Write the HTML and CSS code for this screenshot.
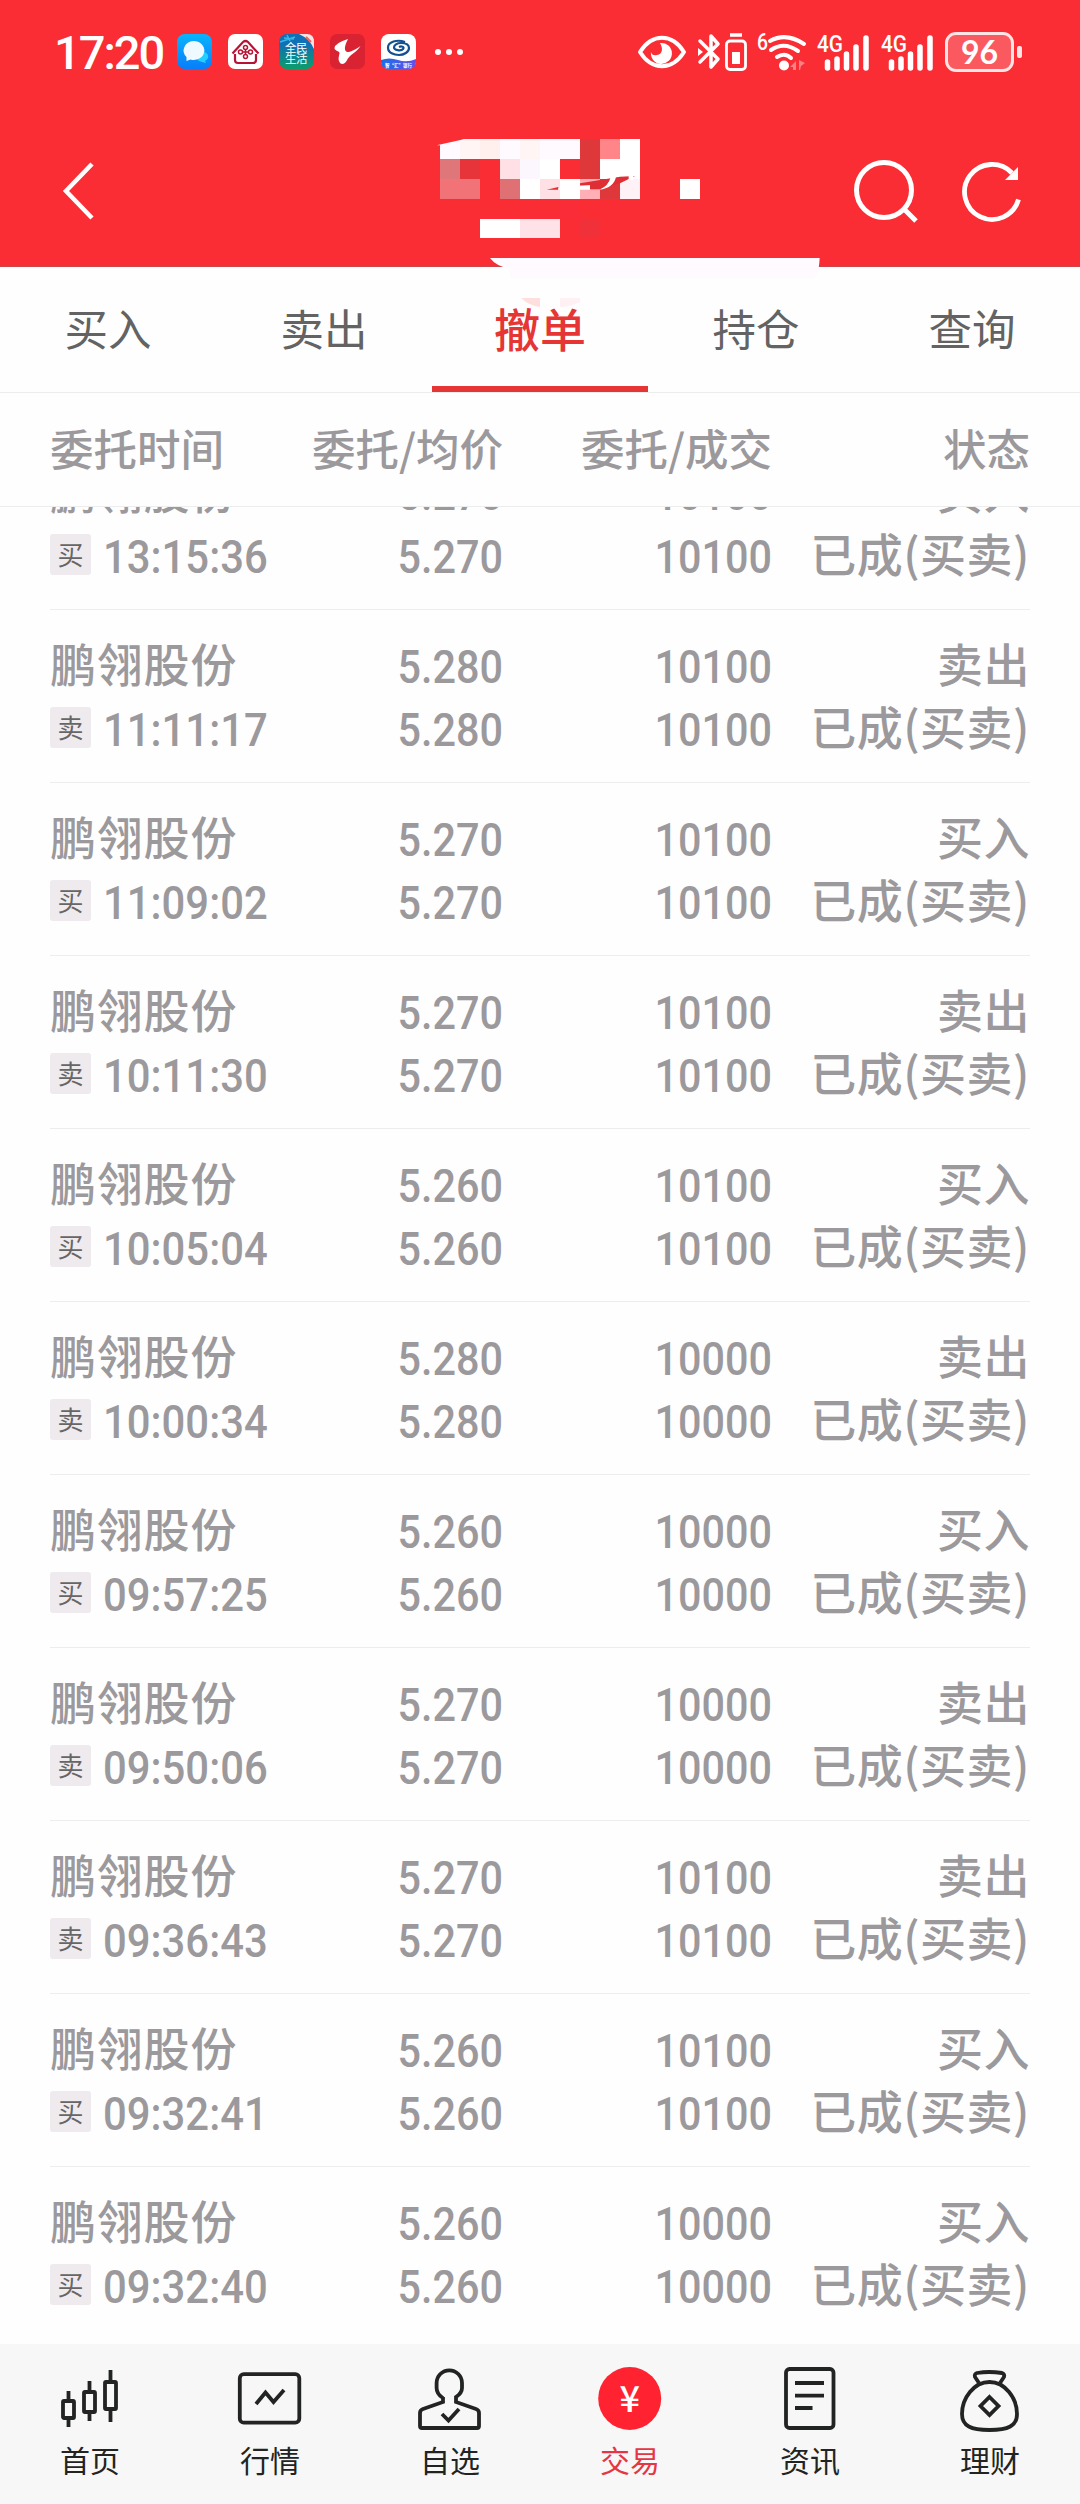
FILE: index.html
```html
<!DOCTYPE html>
<html lang="zh-CN">
<head>
  <meta charset="UTF-8">
  <title>撤单</title>
  <link rel="stylesheet" href="styles.css">
</head>
<body>
  <header class="header">
    <div class="status-bar">
      <span class="clock">17:20</span>
      <div class="apps">
        <svg width="35" height="35" viewBox="0 0 35 35">
          <defs><linearGradient id="blue" x2="0" y2="1"><stop stop-color="#0ab4fd"/><stop offset="1" stop-color="#087dfb"/></linearGradient></defs>
          <rect width="35" height="35" rx="8" fill="url(#blue)"/>
          <path d="M20 25a6 5 0 1 1 8 2l1 2-4-1a6 5 0 0 1-5-3z" fill="#22cfff"/>
          <path d="M16.500 7a10.500 9.500 0 1 1-3 18.500l-4 1.500v-4a10.500 9.500 0 0 1 7-16z" fill="#eefaff"/>
        </svg>
        <svg width="35" height="35" viewBox="0 0 35 35">
          <rect width="35" height="35" rx="7" fill="#fff"/>
          <g fill="none" stroke="#b71435" stroke-width="1.500">
            <path d="M4.500 19.500 15 8q2.500-2 5 0l10.500 11.500M7 20v6q0 3 3 3h15q3 0 3-3v-6" stroke-width="2.200"/>
            <circle cx="17.500" cy="13.500" r="2"/><circle cx="17.500" cy="22.500" r="2"/>
            <circle cx="12.500" cy="18" r="2"/><circle cx="22.500" cy="18" r="2"/>
            <path d="M14 18h7M17.500 15v6"/>
          </g>
        </svg>
        <svg width="35" height="35" viewBox="0 0 35 35">
          <defs><linearGradient id="teal" x2="0" y2="1"><stop offset=".3" stop-color="#1070b5"/><stop offset="1" stop-color="#0c9d68"/></linearGradient></defs>
          <rect width="35" height="35" rx="8" fill="url(#teal)"/>
          <path d="M20 0h8q7 0 7 8v7Q31 5 20 0z" fill="#f4e3e3"/>
          <path d="M1 8 16 3M5 4l10 1M8 1l3 6" stroke="#37b7e8" stroke-width="1.500"/>
          <path d="m27 3 5 5" stroke="#e06464" stroke-width="2"/>
          <text x="6" y="18" class="app-text">全</text><text x="17" y="18" class="app-text">民</text>
          <text x="6" y="29" class="app-text">生</text><text x="17" y="29" class="app-text">活</text>
        </svg>
        <svg width="35" height="35" viewBox="0 0 35 35">
          <rect width="35" height="35" rx="7" fill="#d92332"/>
          <path d="M18 5Q5 9 4.500 14c0 3 5 3 5 5s-2 6 0 9c2 4 6 1 7-1 3-7 10-8 14-15-6 4-10 6-13 6-4-1-3-6 .5-13z" fill="#fff"/>
        </svg>
        <svg width="35" height="35" viewBox="0 0 35 35">
          <defs><linearGradient id="wave"><stop stop-color="#176fe8"/><stop offset="1" stop-color="#694ee9"/></linearGradient></defs>
          <rect width="35" height="35" rx="8" fill="#fff"/>
          <path d="M0 26q8-3 17 0t18-1v3q0 7-8 7H8q-8 0-8-7z" fill="url(#wave)"/>
          <path d="M24 8C16 5 7 8 7 13.500S13 21 18 21s10-3 10-7-4-5-8-5-7 2-7 4.500 7 4 9 1.500-2-3-4-2" fill="none" stroke="#12508f" stroke-width="2.200"/>
          <text x="4" y="32.500" textLength="27" lengthAdjust="spacingAndGlyphs" class="app-tag">智“汇”银行</text>
        </svg>
      </div>
      <svg class="more" width="28" height="8" viewBox="0 0 28 8" fill="#fff"><circle cx="3" cy="4" r="3"/><circle cx="14" cy="4" r="3"/><circle cx="25" cy="4" r="3"/></svg>

      <div class="system">
        <svg width="48" height="34" viewBox="0 0 48 34">
          <path d="M2 17C14-2 34-2 46 17 34 36 14 36 2 17z" fill="none" stroke="#fff" stroke-width="4" stroke-linejoin="round"/>
          <path d="M22 8a10.500 10.500 0 1 1-9 9q1 4 6 3c6-1 6-7 3-12z" fill="#fff"/>
        </svg>
        <svg class="bluetooth" width="23" height="37" viewBox="0 0 23 37">
          <path d="m2 8 18 18-7 8V3l7 8L2 29" fill="none" stroke="#fff" stroke-width="3.500" stroke-linejoin="round" stroke-linecap="round"/>
          <path d="m0 15 5 4-5 4z" fill="#fff"/>
        </svg>
        <svg class="device" width="22" height="38" viewBox="0 0 22 38">
          <rect x="1.500" y="8" width="19" height="28.500" rx="3.500" fill="none" stroke="#fff" stroke-width="2.800"/>
          <path d="M5 2h12" stroke="#fff" stroke-width="3.500"/><path d="M7 19h8v12H7z" fill="#fff"/>
        </svg>
        <svg class="wifi" width="51" height="38" viewBox="0 0 51 38">
          <text x="0" y="17" class="net" textLength="11" lengthAdjust="spacingAndGlyphs">6</text>
          <g fill="none" stroke="#fff" stroke-width="4" stroke-linecap="round"><path d="M13 8q16-9 34 3M14 17q13-9 27 1M20 24q8-5 14 1"/></g>
          <circle cx="27" cy="32.500" r="5" fill="#fff"/>
          <path d="m33 34 6-6v9h-3v-3zm15-4-6-3v10l1 0 1-4z" fill="#fff" opacity=".4"/>
        </svg>
        <svg class="signal" width="52" height="38" viewBox="0 0 52 38">
          <text x="0" y="19" class="net" textLength="26" lengthAdjust="spacingAndGlyphs">4G</text>
          <path d="M10.500 29v6M20 26v9M29.500 21v14M39 14v21M49 5v30" stroke="#fff" stroke-width="5.500" stroke-linecap="round"/>
        </svg>
        <svg class="signal" width="52" height="38" viewBox="0 0 52 38">
          <text x="0" y="19" class="net" textLength="26" lengthAdjust="spacingAndGlyphs">4G</text>
          <path d="M10.500 29v6M20 26v9M29.500 21v14M39 14v21M49 5v30" stroke="#fff" stroke-width="5.500" stroke-linecap="round"/>
        </svg>
        <div class="battery"><span>96</span></div>
        <i class="battery-tip"></i>
      </div>
    </div>

    <div class="title-bar">
      <svg width="32" height="58" viewBox="0 0 32 58"><path d="M30 2 4 29l26 27" fill="none" stroke="#fff" stroke-width="4.500"/></svg>
      <div class="actions">
        <svg width="64" height="64" viewBox="0 0 64 64" fill="none" stroke="#fff" stroke-width="5">
          <circle cx="30" cy="31" r="27.500"/><path d="m50 50 12 12"/>
        </svg>
        <svg width="60" height="64" viewBox="0 0 60 64">
          <path d="M56.500 40.500A27.500 27.500 0 1 1 50 14" fill="none" stroke="#fff" stroke-width="4.800"/><path d="M56 8v13H43z" fill="#fff"/>
        </svg>
      </div>
    </div>

    <!-- pixelated account name -->
    <svg class="mosaic" width="440" height="200" viewBox="0 0 1320 600">
      <path d="M110 106l85-19h345v60H120v-41z" fill="#fffaff"/>
      <path d="M180 91l15-4h45v60h-60zM360 87h60v60h-60z" fill="#fff5f5"/>
      <path d="M240 87h60v60h-60z" fill="#ffefed"/>
      <path d="M120 147h60v60h-60z" fill="#df777a"/>
      <path d="M180 147h60v60h-60z" fill="#e7333a"/>
      <path d="M300 147h60v60h-60zM420 207h60v60h-60z" fill="#ffe0e5"/>
      <path d="M360 147h60v60h-60z" fill="#fcf7ff"/>
      <path d="M420 147h60v60h-60zM360 207h60v60h-60zM480 207h60v60h-60zM600 147h120v60H600zM660 87h60v60h-60zM840 207h60v60h-60zM240 327h120v57H240z" fill="#fff"/>
      <path d="M540 87h60v120h-60zM600 207h60v60h-60z" fill="#df383b"/>
      <path d="M600 87h60v60h-60z" fill="#ff8589"/>
      <path d="M120 207h120v60H120z" fill="#f17377"/>
      <path d="M300 207h60v60h-60z" fill="#df7074"/>
      <path d="M540 207h60v60h-60z" fill="#ffafb5"/>
      <path d="M660 207h60v60h-60z" fill="#fff2f7"/>
      <path d="M360 327h120v57H360z" fill="#ffe2e7"/>
      <path d="M480 267h60v60h-60z" fill="#f92c38"/>
      <path d="M540 327h60v57h-60z" fill="#f03139"/>
      <path d="M440 239l35-8v8zM540 220l120-20 45-2-45 22-60 18h-30v-12h-30z" fill="#df2f35"/>
      <path d="M475 235l95-9v13H475zM598 239q28-11 34-38h16q-8 34-50 38zM686 194h14v16h-14z" fill="#fff"/>
      <path d="M270 444h989q-3 61-22 61H330v-29q-42-7-60-32z" fill="#fffaff"/>
      <path d="M364 564h56v27q-32-3-56-27z" fill="#ffdfdd"/>
      <path d="M480 564h60v12q-30 15-60 15z" fill="#fff0f4"/>
    </svg>
  </header>

  <nav class="tabs">
    <a>买入</a>
    <a>卖出</a>
    <a class="active">撤单</a>
    <a>持仓</a>
    <a>查询</a>
  </nav>

  <div class="columns list-head">
    <span>委托时间</span>
    <span>委托/均价</span>
    <span>委托/成交</span>
    <span>状态</span>
  </div>

  <main class="list" id="list"></main>

  <footer class="nav">
    <a>
      <svg width="64" height="66" viewBox="0 0 64 66" class="line">
        <rect x="5" y="35" width="11" height="17" rx="1"/><path d="M10.500 25v10M10.500 52v9"/>
        <rect x="26" y="26" width="11" height="20" rx="1"/><path d="M31.500 15v11M31.500 46v9"/>
        <rect x="47" y="16" width="11" height="27" rx="1"/><path d="M52.500 4v12M52.500 43v13"/>
      </svg>
      首页
    </a>
    <a>
      <svg width="64" height="66" viewBox="0 0 64 66" class="line">
        <rect x="1.800" y="8.200" width="59.500" height="48.500" rx="4"/><path d="m18 38 9.500-11.500L35.500 36 46 24"/>
      </svg>
      行情
    </a>
    <a>
      <svg width="64" height="66" viewBox="0 0 64 66" class="line">
        <path d="M25 32v4L5 43q-3 1-3 4v13q0 2 2 2h55q2 0 2-2V47q0-3-3-4l-20-7v-4q6-4 6-10v-5a12.700 12.700 0 0 0-25 0v5q0 6 6 10z" stroke="none"/>
        <path d="M25 31v5L5 43q-3 1-3 4v13q0 2 2 2h55q2 0 2-2V47q0-3-3-4l-20-7v-5q6-4 6-9v-5a12.700 12.700 0 0 0-25.400 0v5q0 6 6.400 10"/>
        <path d="m24 48 6.500 6.500L41 43"/>
      </svg>
      自选
    </a>
    <a class="active">
      <svg width="64" height="66" viewBox="0 0 64 66">
        <circle cx="31.700" cy="32.500" r="31.500" fill="#ff2332"/><text x="31.700" y="46" text-anchor="middle" class="yen">¥</text>
      </svg>
      交易
    </a>
    <a>
      <svg width="64" height="66" viewBox="0 0 64 66" class="line">
        <rect x="8" y="3" width="47.500" height="59" rx="3.500"/><path d="M17 17h29M17 29.700h29M17 42h17.500"/>
      </svg>
      资讯
    </a>
    <a>
      <svg width="64" height="66" viewBox="0 0 64 66" class="line">
        <path d="M31.500 16C16 16 4 32 4 48c0 12 9 16 27.500 16S59 60 59 48c0-16-12-32-27.500-32z"/>
        <path d="m21 17-4-6q-1-3 2-4 12-2 25 0 3 1 2 4l-4 6M31.500 31l9 9-9 9-9-9z"/>
      </svg>
      理财
    </a>
  </footer>

  <script>
    const orders = [
      ['买', '13:15:36', '5.270', '10100'],
      ['卖', '11:11:17', '5.280', '10100'],
      ['买', '11:09:02', '5.270', '10100'],
      ['卖', '10:11:30', '5.270', '10100'],
      ['买', '10:05:04', '5.260', '10100'],
      ['卖', '10:00:34', '5.280', '10000'],
      ['买', '09:57:25', '5.260', '10000'],
      ['卖', '09:50:06', '5.270', '10000'],
      ['卖', '09:36:43', '5.270', '10100'],
      ['买', '09:32:41', '5.260', '10100'],
      ['买', '09:32:40', '5.260', '10000']
    ];

    document.getElementById('list').innerHTML = orders.map(([side, time, price, count]) => `
      <div class="columns order">
        <div>
          <p class="name">鹏翎股份</p>
          <p class="time"><span class="badge">${side}</span><span class="num">${time}</span></p>
        </div>
        <div><p class="num">${price}</p><p class="num">${price}</p></div>
        <div><p class="num">${count}</p><p class="num">${count}</p></div>
        <div class="state"><p>${side === '买' ? '买入' : '卖出'}</p><p>已成(买卖)</p></div>
      </div>`).join('');
  </script>
</body>
</html>
```
FILE: styles.css
```css
* {
  box-sizing: border-box;
}

body {
  margin: 0;
  width: 1080px;
  height: 2504px;
  display: flex;
  flex-direction: column;
  overflow: hidden;
  background: #fefefe;
  font-family: "Noto Sans CJK SC", sans-serif;
}

p {
  margin: 0;
}

svg {
  display: block;
  flex: none;
  overflow: visible;
}

/* header */
.header {
  position: relative;
  flex: none;
  height: 267px;
  background: #f92d33;
  border-bottom: 1px solid #c9474a;
}

.status-bar {
  display: flex;
  align-items: center;
  height: 103px;
  padding: 0 58px 0 54px;
}

.clock {
  width: 123px;
  padding-top: 3px;
  color: #fff;
  font: 500 47px/50px Roboto, sans-serif;
  letter-spacing: -2px;
}

.apps {
  display: flex;
  gap: 16px;
}

.app-text {
  fill: #fff;
  font-size: 11.5px;
}

.app-tag {
  fill: #fff;
  font-size: 5px;
  font-weight: 700;
}

.more {
  margin-left: 19px;
}

.system {
  display: flex;
  align-items: center;
  margin-left: auto;
}

.bluetooth {
  margin-left: 12px;
}

.device {
  margin-left: 4px;
}

.wifi {
  margin-left: 10px;
}

.signal {
  margin-left: 9px;
}

.signal + .signal {
  margin-left: 12px;
}

.net {
  fill: #fff;
  font: 500 24px Roboto, sans-serif;
}

.battery {
  width: 69px;
  height: 40px;
  margin-left: 12px;
  border: 3px solid #ffe4e5;
  border-radius: 11px;
  background: #fa5a5f;
  color: #fff;
  font: 700 32px/34px Lato, sans-serif;
  text-align: center;
}

.battery-tip {
  width: 5px;
  height: 12px;
  margin-left: 3px;
  border-radius: 2px;
  background: #ffe4e5;
}

.title-bar {
  display: flex;
  justify-content: space-between;
  align-items: center;
  height: 176px;
  padding: 0 58px 0 62px;
}

.actions {
  display: flex;
  gap: 44px;
}

.mosaic {
  position: absolute;
  left: 400px;
  top: 110px;
  z-index: 1;
}

/* tabs */
.tabs {
  display: flex;
  flex: none;
  height: 126px;
  border-bottom: 1px solid #ededed;
}

.tabs a {
  flex: 1;
  color: #626362;
  font-size: 43.5px;
  line-height: 122px;
  text-align: center;
}

.tabs .active {
  color: #e63535;
  font-size: 46px;
  font-weight: 500;
  line-height: 121px;
  border-bottom: 6px solid #e63535;
}

/* order list */
.columns {
  display: grid;
  grid-template-columns: 218px 235px 269px 1fr;
  margin: 0 50px;
  text-align: right;
  color: #9b999c;
}

.columns > :first-child {
  text-align: left;
}

.list-head {
  flex: none;
  height: 114px;
  margin: 0;
  padding: 0 50px;
  border-bottom: 1px solid #ededed;
  font-size: 43.5px;
  font-weight: 500;
  line-height: 110px;
  white-space: nowrap;
}

.list {
  flex: 1;
  min-height: 0;
  display: flex;
  flex-direction: column;
  justify-content: flex-end;
  overflow: hidden;
  padding-bottom: 4px;
}

.order {
  flex: none;
  height: 173px;
  padding-top: 21px;
  border-bottom: 1px solid #ededed;
  font-size: 46px;
  font-weight: 500;
  line-height: 63px;
  white-space: nowrap;
}

.order:last-child {
  border-bottom-color: transparent;
}

.order p {
  height: 63px;
}

.name {
  letter-spacing: 0.8px;
}

.state {
  letter-spacing: 0.5px;
}

.time {
  display: flex;
}

.badge {
  flex: none;
  width: 41px;
  height: 41px;
  margin: 13px 12px 0 0;
  border-radius: 3px;
  background: #eeeaee;
  color: #666;
  font-size: 26px;
  font-weight: 400;
  line-height: 39px;
  text-align: center;
}

/* digits are a little narrower than the font draws them */
.num {
  padding-top: 4px;
  font: 500 47px/63px Roboto, sans-serif;
  transform: scaleX(0.88);
  transform-origin: right;
}

.time .num {
  transform: scaleX(0.89);
  transform-origin: left;
}

/* bottom navigation */
.nav {
  display: flex;
  flex: none;
  height: 160px;
  background: #f7f7f7;
}

.nav a {
  flex: 1;
  display: flex;
  flex-direction: column;
  align-items: center;
  padding-top: 22px;
  color: #222423;
  font-size: 30px;
  line-height: 55px;
}

.nav .active {
  color: #e63545;
}

.line {
  fill: none;
  stroke: #222423;
  stroke-width: 3.8px;
}

.yen {
  fill: #fff;
  font: 500 36px "Noto Sans CJK SC", sans-serif;
}
```
